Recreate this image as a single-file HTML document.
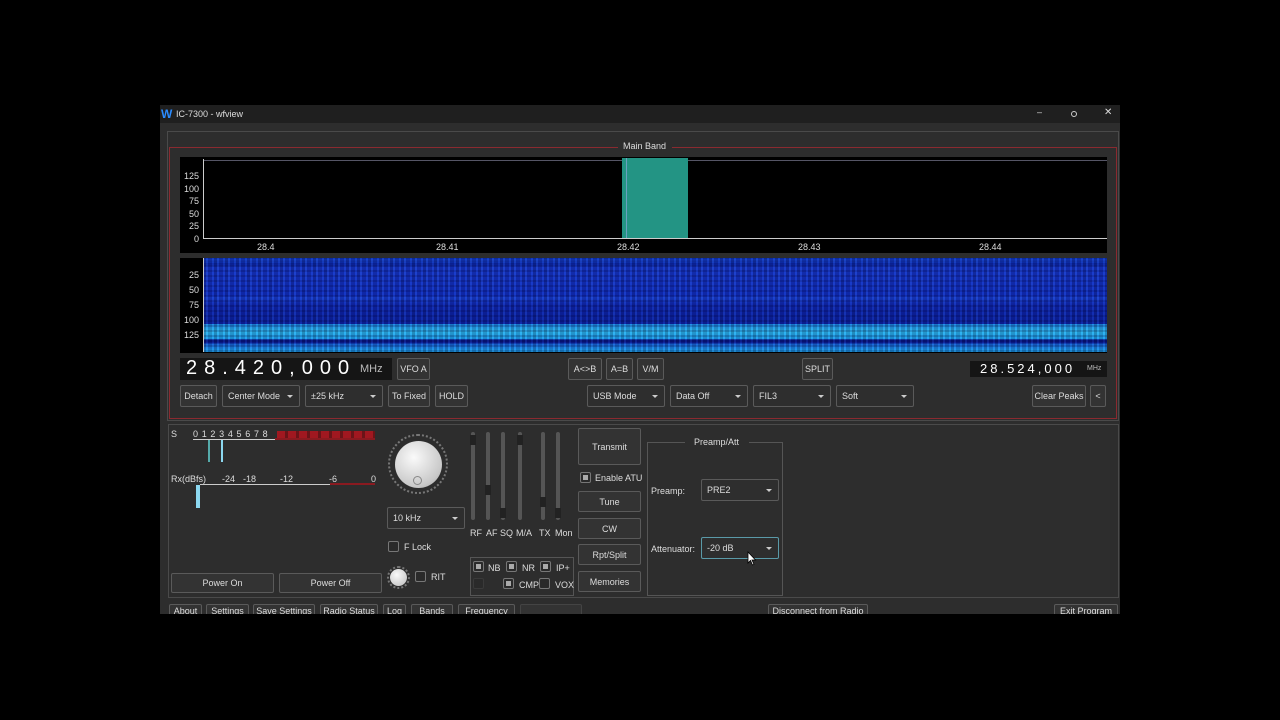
<!DOCTYPE html>
<html><head><style>
*{box-sizing:border-box;margin:0;padding:0}
body{width:1280px;height:720px;background:#000;position:relative;overflow:hidden;font-family:"Liberation Sans",sans-serif;color:#ddd;font-size:9px}
.a{position:absolute}
.b{position:absolute;border:1px solid #5a5a5a;border-radius:2px;background:#333;color:#ddd;font-size:9px;display:flex;align-items:center;justify-content:center;white-space:nowrap}
.c{position:absolute;border:1px solid #5a5a5a;border-radius:2px;background:#2e2e2e;color:#ddd;font-size:9px;display:flex;align-items:center;padding-left:5px}
.c:after{content:"";position:absolute;right:6px;top:50%;margin-top:-1px;border-left:3px solid transparent;border-right:3px solid transparent;border-top:3px solid #ccc}
.ck{position:absolute;width:11px;height:11px;border:1px solid #777;border-radius:2px;background:#2a2a2a}
.ck.on:after{content:"";position:absolute;left:2px;top:2px;width:5px;height:5px;background:#aaa}
.t{position:absolute;font-size:9px;color:#ddd;white-space:nowrap}
.sl{position:absolute;width:4px;background:#555;border-radius:2px}
.sl i{position:absolute;left:-1px;width:6px;height:10px;background:#222}
</style></head><body>
<div class="a" style="left:160px;top:105px;width:960px;height:510px;background:#2d2d2d"></div>
<div class="a" style="left:160px;top:105px;width:960px;height:18px;background:#1f1f1f"></div>
<div class="t" style="left:161px;top:107px;color:#2b8cff;font-weight:bold;font-size:12px">W</div>
<div class="t" style="left:176px;top:109px">IC-7300 - wfview</div>
<div class="t" style="left:1037px;top:107px">–</div>
<div class="a" style="left:1071px;top:111px;width:6px;height:6px;border:1px solid #ccc;border-radius:50%"></div>
<div class="t" style="left:1104px;top:107px;font-size:10px">✕</div>
<div class="a" style="left:167px;top:131px;width:952px;height:290px;border:1px solid #4a4a4a"></div>
<div class="a" style="left:169px;top:147px;width:948px;height:272px;border:1px solid #8a2a30"></div>
<div class="a" style="left:618px;top:140px;width:54px;height:12px;background:#2d2d2d"></div>
<div class="t" style="left:623px;top:141px">Main Band</div>
<!-- spectrum -->
<div class="a" style="left:180px;top:157px;width:927px;height:96px;background:#000"></div>
<div class="a" style="left:203px;top:160px;width:904px;height:1px;background:#556"></div>
<div class="a" style="left:203px;top:159px;width:1px;height:80px;background:#ccc"></div>
<div class="a" style="left:203px;top:238px;width:904px;height:1px;background:#ccc"></div>
<div class="a" style="left:622px;top:158px;width:66px;height:80px;background:#239484"></div>
<div class="a" style="left:626px;top:158px;width:1px;height:80px;background:#6aa0c0"></div>
<div class="t" style="left:184px;top:170px;line-height:12.5px;text-align:right;width:15px">125<br>100<br>75<br>50<br>25<br>0</div>
<div class="t" style="left:257px;top:242px">28.4</div>
<div class="t" style="left:436px;top:242px">28.41</div>
<div class="t" style="left:617px;top:242px">28.42</div>
<div class="t" style="left:798px;top:242px">28.43</div>
<div class="t" style="left:979px;top:242px">28.44</div>
<!-- waterfall -->
<div class="a" style="left:180px;top:258px;width:927px;height:95px;background:#000"></div>
<div class="a" style="left:203px;top:258px;width:904px;height:94px;background:linear-gradient(#0a2fb0 0,#1a4ae0 3%,#0a25a0 6%,#1838c8 10%,#1230c0 40%,#1a40d0 42%,#1028b0 50%,#0c22a0 70%,#1e8ee8 70%,#30c0f0 78%,#20a8f0 86%,#0a1a90 87%,#0a1a90 90%,#1a70e0 92%,#20b0f0 100%)"></div>
<div class="a" style="left:203px;top:258px;width:904px;height:94px;background:repeating-linear-gradient(90deg,rgba(0,0,40,.25) 0 3px,rgba(80,140,255,.12) 3px 5px,rgba(0,0,60,.2) 5px 9px,rgba(60,120,255,.1) 9px 11px),repeating-linear-gradient(0deg,rgba(0,0,50,.2) 0 2px,transparent 2px 5px)"></div>
<div class="a" style="left:203px;top:258px;width:1px;height:94px;background:#ccc"></div>
<div class="t" style="left:184px;top:268px;line-height:15px;text-align:right;width:15px">25<br>50<br>75<br>100<br>125</div>
<!-- freq row -->
<div class="a" style="left:180px;top:358px;width:212px;height:22px;background:#151515"></div>
<div class="t" style="left:186px;top:357px;font-size:20px;letter-spacing:7px;color:#fff">28.420,000</div>
<div class="t" style="left:360px;top:363px;font-size:11px;color:#bbb">MHz</div>
<div class="b" style="left:397px;top:358px;width:33px;height:22px">VFO A</div>
<div class="b" style="left:568px;top:358px;width:34px;height:22px">A&lt;&gt;B</div>
<div class="b" style="left:606px;top:358px;width:27px;height:22px">A=B</div>
<div class="b" style="left:637px;top:358px;width:27px;height:22px">V/M</div>
<div class="b" style="left:802px;top:358px;width:31px;height:22px">SPLIT</div>
<div class="a" style="left:970px;top:361px;width:137px;height:16px;background:#151515"></div>
<div class="t" style="left:980px;top:361px;font-size:13px;letter-spacing:3px;color:#fff">28.524,000</div>
<div class="t" style="left:1087px;top:365px;font-size:7px;color:#bbb">MHz</div>
<div class="b" style="left:180px;top:385px;width:37px;height:22px">Detach</div>
<div class="c" style="left:222px;top:385px;width:78px;height:22px">Center Mode</div>
<div class="c" style="left:305px;top:385px;width:78px;height:22px">±25 kHz</div>
<div class="b" style="left:388px;top:385px;width:42px;height:22px">To Fixed</div>
<div class="b" style="left:435px;top:385px;width:33px;height:22px">HOLD</div>
<div class="c" style="left:587px;top:385px;width:78px;height:22px">USB Mode</div>
<div class="c" style="left:670px;top:385px;width:78px;height:22px">Data Off</div>
<div class="c" style="left:753px;top:385px;width:78px;height:22px">FIL3</div>
<div class="c" style="left:836px;top:385px;width:78px;height:22px">Soft</div>
<div class="b" style="left:1032px;top:385px;width:54px;height:22px">Clear Peaks</div>
<div class="b" style="left:1090px;top:385px;width:16px;height:22px">&lt;</div>
<!-- lower panel -->
<div class="a" style="left:168px;top:424px;width:951px;height:174px;border:1px solid #4a4a4a"></div>
<div class="t" style="left:171px;top:429px">S</div>
<div class="t" style="left:193px;top:429px;letter-spacing:0.6px">0 1 2 3 4 5 6 7 8</div>
<div class="a" style="left:277px;top:431px;width:98px;height:7px;background:repeating-linear-gradient(90deg,#a01820 0 8px,#6a1418 8px 11px)"></div>
<div class="a" style="left:193px;top:439px;width:82px;height:1px;background:#ccc"></div>
<div class="a" style="left:275px;top:438px;width:100px;height:2px;background:#8a1a20"></div>
<div class="a" style="left:208px;top:440px;width:2px;height:22px;background:#5aa"></div>
<div class="a" style="left:221px;top:440px;width:2px;height:22px;background:#8cd8f0"></div>
<div class="t" style="left:171px;top:474px">Rx(dBfs)</div>
<div class="t" style="left:222px;top:474px">-24</div><div class="t" style="left:243px;top:474px">-18</div>
<div class="t" style="left:280px;top:474px">-12</div><div class="t" style="left:329px;top:474px">-6</div>
<div class="t" style="left:371px;top:474px">0</div>
<div class="a" style="left:200px;top:484px;width:130px;height:1px;background:#ccc"></div>
<div class="a" style="left:330px;top:483px;width:45px;height:2px;background:#8a1a20"></div>
<div class="a" style="left:196px;top:485px;width:4px;height:23px;background:#8cd8f0"></div>
<div class="a" style="left:388px;top:434px;width:60px;height:60px;border-radius:50%;border:2px dotted #777"></div>
<div class="a" style="left:395px;top:441px;width:47px;height:47px;border-radius:50%;background:radial-gradient(circle at 40% 35%,#fafafa,#c8c8c8 70%,#999)"></div>
<div class="a" style="left:413px;top:476px;width:9px;height:9px;border-radius:50%;border:1px solid #888"></div>
<div class="c" style="left:387px;top:507px;width:78px;height:22px">10 kHz</div>
<div class="ck" style="left:388px;top:541px"></div>
<div class="t" style="left:404px;top:542px">F Lock</div>
<div class="a" style="left:387px;top:566px;width:23px;height:23px;border-radius:50%;border:2px dotted #777"></div>
<div class="a" style="left:390px;top:569px;width:17px;height:17px;border-radius:50%;background:radial-gradient(circle at 40% 35%,#fafafa,#bbb)"></div>
<div class="ck" style="left:415px;top:571px"></div>
<div class="t" style="left:431px;top:572px">RIT</div>
<div class="b" style="left:171px;top:573px;width:103px;height:20px">Power On</div>
<div class="b" style="left:279px;top:573px;width:103px;height:20px">Power Off</div>
<div class="sl" style="left:471px;top:432px;height:88px"><i style="top:3px"></i></div>
<div class="sl" style="left:486px;top:432px;height:88px"><i style="top:53px"></i></div>
<div class="sl" style="left:501px;top:432px;height:88px"><i style="top:76px"></i></div>
<div class="sl" style="left:518px;top:432px;height:88px"><i style="top:3px"></i></div>
<div class="sl" style="left:541px;top:432px;height:88px"><i style="top:65px"></i></div>
<div class="sl" style="left:556px;top:432px;height:88px"><i style="top:76px"></i></div>
<div class="t" style="left:470px;top:528px">RF</div><div class="t" style="left:486px;top:528px">AF</div>
<div class="t" style="left:500px;top:528px">SQ</div><div class="t" style="left:516px;top:528px">M/A</div>
<div class="t" style="left:539px;top:528px">TX</div><div class="t" style="left:555px;top:528px">Mon</div>
<div class="a" style="left:470px;top:557px;width:104px;height:39px;border:1px solid #555"></div>
<div class="ck on" style="left:473px;top:561px"></div><div class="t" style="left:488px;top:563px">NB</div>
<div class="ck on" style="left:506px;top:561px"></div><div class="t" style="left:522px;top:563px">NR</div>
<div class="ck on" style="left:540px;top:561px"></div><div class="t" style="left:556px;top:563px">IP+</div>
<div class="ck" style="left:473px;top:578px;border-color:#3a3a3a"></div>
<div class="ck on" style="left:503px;top:578px"></div><div class="t" style="left:519px;top:580px">CMP</div>
<div class="ck" style="left:539px;top:578px"></div><div class="t" style="left:555px;top:580px">VOX</div>
<div class="b" style="left:578px;top:428px;width:63px;height:37px">Transmit</div>
<div class="ck on" style="left:580px;top:472px"></div><div class="t" style="left:595px;top:473px">Enable ATU</div>
<div class="b" style="left:578px;top:491px;width:63px;height:21px">Tune</div>
<div class="b" style="left:578px;top:518px;width:63px;height:21px">CW</div>
<div class="b" style="left:578px;top:544px;width:63px;height:21px">Rpt/Split</div>
<div class="b" style="left:578px;top:571px;width:63px;height:21px">Memories</div>
<div class="a" style="left:647px;top:442px;width:136px;height:154px;border:1px solid #555"></div>
<div class="a" style="left:685px;top:436px;width:64px;height:12px;background:#2d2d2d"></div>
<div class="t" style="left:694px;top:437px">Preamp/Att</div>
<div class="t" style="left:651px;top:486px">Preamp:</div>
<div class="c" style="left:701px;top:479px;width:78px;height:22px">PRE2</div>
<div class="t" style="left:651px;top:544px">Attenuator:</div>
<div class="c" style="left:701px;top:537px;width:78px;height:22px;border-color:#5a9aa8">-20 dB</div>
<svg class="a" style="left:747px;top:551px" width="10" height="15" viewBox="0 0 10 15"><path d="M1 1 L1 12 L3.5 9.5 L5.5 14 L7 13.3 L5 9 L8.5 9 Z" fill="#fff" stroke="#000" stroke-width="0.8"/></svg>
<!-- bottom buttons -->
<div class="b" style="left:169px;top:604px;width:33px;height:14px">About</div>
<div class="b" style="left:206px;top:604px;width:43px;height:14px">Settings</div>
<div class="b" style="left:253px;top:604px;width:62px;height:14px">Save Settings</div>
<div class="b" style="left:320px;top:604px;width:58px;height:14px">Radio Status</div>
<div class="b" style="left:383px;top:604px;width:23px;height:14px">Log</div>
<div class="b" style="left:411px;top:604px;width:42px;height:14px">Bands</div>
<div class="b" style="left:458px;top:604px;width:57px;height:14px">Frequency</div>
<div class="b" style="left:520px;top:604px;width:62px;height:14px;border-color:#444"></div>
<div class="b" style="left:768px;top:604px;width:100px;height:14px">Disconnect from Radio</div>
<div class="b" style="left:1054px;top:604px;width:64px;height:14px">Exit Program</div>
<div class="a" style="left:0;top:614px;width:1280px;height:106px;background:#000"></div>
</body></html>
